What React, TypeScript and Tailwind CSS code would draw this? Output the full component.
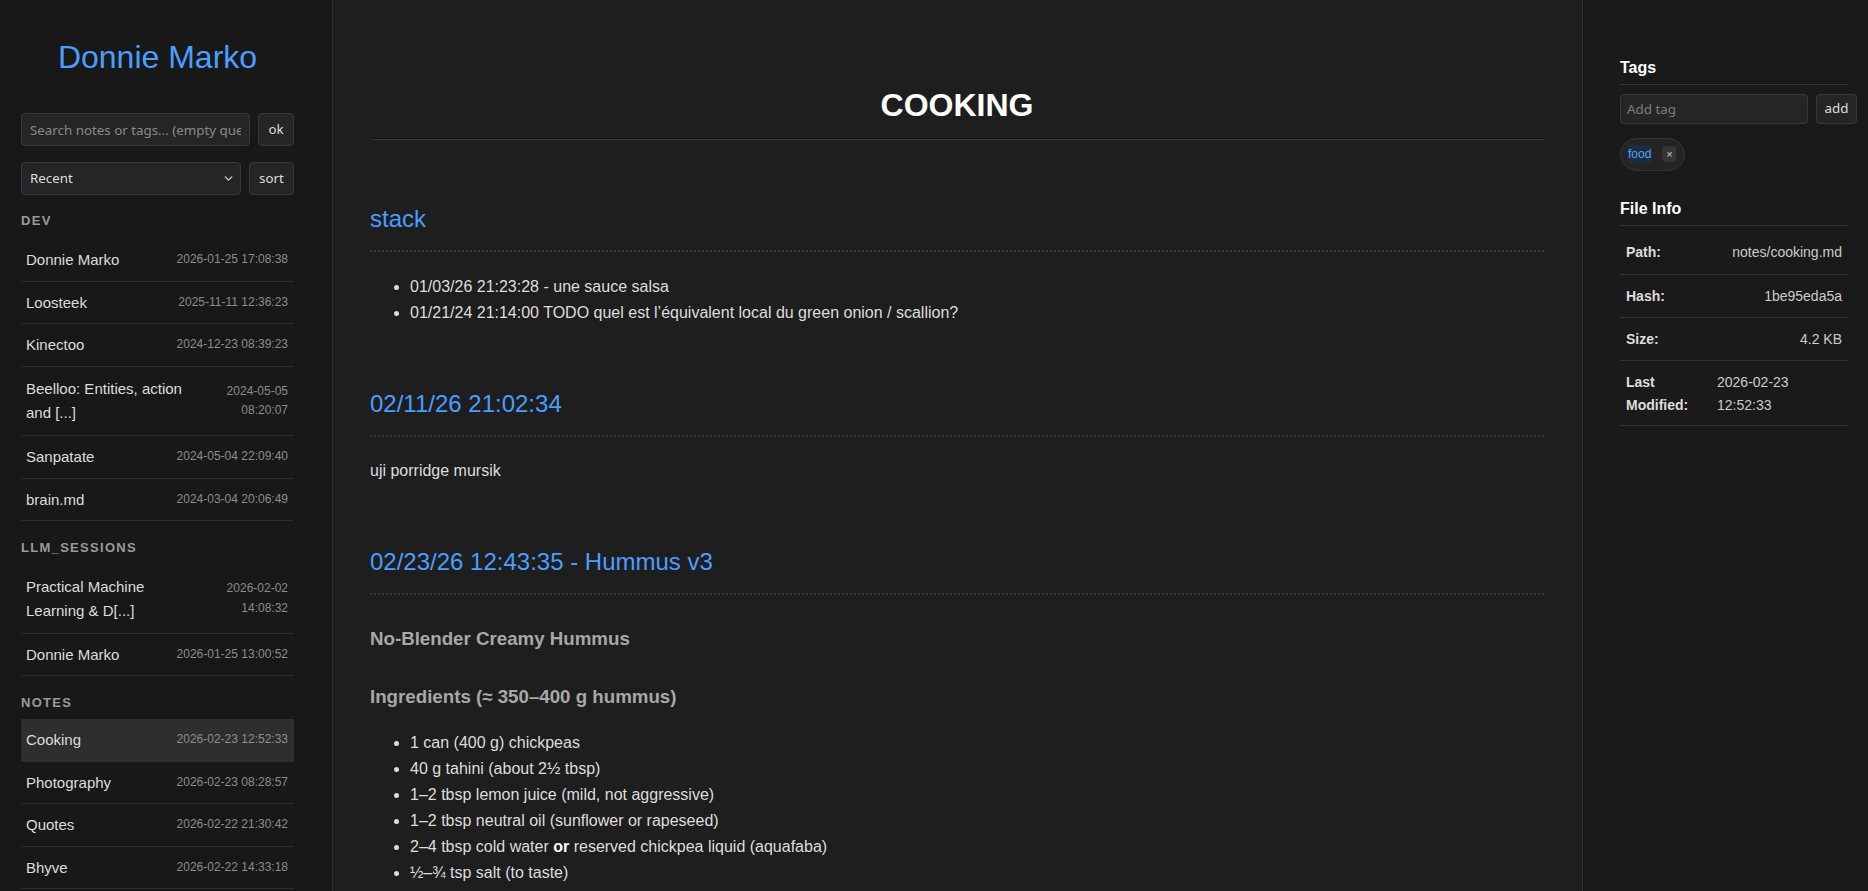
import { ChevronDown } from "lucide-react";

type Note = { name: string; date: string; wrap?: boolean; active?: boolean };
type Section = { title: string; notes: Note[] };

const sections: Section[] = [
  {
    title: "Dev",
    notes: [
      { name: "Donnie Marko", date: "2026-01-25 17:08:38" },
      { name: "Loosteek", date: "2025-11-11 12:36:23" },
      { name: "Kinectoo", date: "2024-12-23 08:39:23" },
      { name: "Beelloo: Entities, action and [...]", date: "2024-05-05 08:20:07", wrap: true },
      { name: "Sanpatate", date: "2024-05-04 22:09:40" },
      { name: "brain.md", date: "2024-03-04 20:06:49" },
    ],
  },
  {
    title: "llm_sessions",
    notes: [
      { name: "Practical Machine Learning & D[...]", date: "2026-02-02 14:08:32", wrap: true },
      { name: "Donnie Marko", date: "2026-01-25 13:00:52" },
    ],
  },
  {
    title: "Notes",
    notes: [
      { name: "Cooking", date: "2026-02-23 12:52:33", active: true },
      { name: "Photography", date: "2026-02-23 08:28:57" },
      { name: "Quotes", date: "2026-02-22 21:30:42" },
      { name: "Bhyve", date: "2026-02-22 14:33:18" },
    ],
  },
];

const fileInfo = [
  { label: "Path:", value: "notes/cooking.md" },
  { label: "Hash:", value: "1be95eda5a" },
  { label: "Size:", value: "4.2 KB" },
];

const ui = { fontFamily: '"Noto Sans", "Open Sans", sans-serif' };

function NoteRow({ note }: { note: Note }) {
  return (
    <div
      className={`flex items-center justify-between border-b border-[#2c2c2c] pl-[5px] pr-[6px] ${
        note.wrap ? "pt-[10.5px] pb-[10px]" : "pt-[9px] pb-[8.5px]"
      } ${note.active ? "bg-[#2e2e2e]" : ""}`}
    >
      <span className="min-w-0 flex-1 pr-2 text-[15px] leading-[1.6] text-[#dddddd]">{note.name}</span>
      <span
        className={`shrink-0 text-right text-xs leading-[1.6] text-[#8c8c8c] ${note.wrap ? "w-[95px]" : "whitespace-nowrap"}`}
      >
        {note.date}
      </span>
    </div>
  );
}

function Sidebar() {
  return (
    <aside className="h-screen w-[333px] shrink-0 overflow-hidden border-r border-[#2f2f2f] bg-[#181818] pl-[21px] pr-[38px] pt-[38px]">
      <h1 className="text-center text-[32px] leading-[38px] text-[#4a9eff]">Donnie Marko</h1>

      <div className="mt-[37px] flex gap-2" style={ui}>
        <input
          placeholder="Search notes or tags... (empty query shows all)"
          className="h-[33px] min-w-0 flex-1 rounded border border-[#383838] bg-[#252525] px-2 text-[13.33px] text-[#dddddd] placeholder:text-[#8a8a8a] focus:outline-none"
        />
        <button className="h-[33px] w-9 rounded border border-[#383838] bg-[#252525] text-[13.33px] text-[#dddddd]">
          ok
        </button>
      </div>

      <div className="mt-4 flex gap-2" style={ui}>
        <div className="relative flex-1">
          <select className="h-[33px] w-full appearance-none rounded border border-[#383838] bg-[#252525] px-2 text-[13.33px] text-[#dddddd] focus:outline-none">
            <option>Recent</option>
            <option>Alphabetical</option>
          </select>
          <ChevronDown className="pointer-events-none absolute right-[6px] top-[10px] h-[13px] w-[13px] text-[#cccccc]" strokeWidth={2.5} />
        </div>
        <button className="h-[33px] w-[45px] rounded border border-[#383838] bg-[#252525] text-[13.33px] text-[#dddddd]">
          sort
        </button>
      </div>

      {sections.map((section, i) => (
        <div key={section.title} className={i === 0 ? "mt-[15px]" : "mt-[16px]"}>
          <h2
            className={`text-[13px] font-bold uppercase leading-[21px] tracking-[1.3px] text-[#9a9a9a] ${
              i === 0 ? "mb-2" : "mb-[6px]"
            }`}
          >
            {section.title}
          </h2>
          {section.notes.map((note) => (
            <NoteRow key={note.name + note.date} note={note} />
          ))}
        </div>
      ))}
    </aside>
  );
}

function EntryTitle({ children, className = "mt-[60px]" }: { children: React.ReactNode; className?: string }) {
  return (
    <h2
      className={`border-b-2 border-dotted border-[#383838] pb-3 text-2xl leading-[38px] text-[#4a9eff] ${className}`}
    >
      {children}
    </h2>
  );
}

function Content() {
  return (
    <main className="h-screen min-w-0 flex-1 overflow-hidden bg-[#1e1e1e] pl-[37px] pr-[38px] pt-[86px] text-base leading-[1.6] text-[#dddddd]">
      <h1 className="border-b border-[#141414] pb-[14px] text-center text-[32px] font-bold leading-[38px] text-white shadow-[0_1px_0_#363636]">
        COOKING
      </h1>

      <EntryTitle className="mt-[61px]">stack</EntryTitle>
      <ul className="mt-[22px] list-disc pl-10">
        <li>01/03/26 21:23:28 - une sauce salsa</li>
        <li>01/21/24 21:14:00 TODO quel est l’équivalent local du green onion / scallion?</li>
      </ul>

      <EntryTitle>02/11/26 21:02:34</EntryTitle>
      <p className="mt-[21px]">uji porridge mursik</p>

      <EntryTitle className="mt-[59px]">02/23/26 12:43:35 - Hummus v3</EntryTitle>
      <h3 className="mt-[29px] text-[18.72px] font-bold leading-[30px] text-[#a8a8a8]">No-Blender Creamy Hummus</h3>
      <h3 className="mt-[28px] text-[18.72px] font-bold leading-[30px] text-[#a8a8a8]">
        Ingredients (≈ 350–400 g hummus)
      </h3>
      <ul className="mt-[18px] list-disc pl-10 leading-[26px]">
        <li>1 can (400 g) chickpeas</li>
        <li>40 g tahini (about 2½ tbsp)</li>
        <li>1–2 tbsp lemon juice (mild, not aggressive)</li>
        <li>1–2 tbsp neutral oil (sunflower or rapeseed)</li>
        <li>
          2–4 tbsp cold water <strong className="text-white">or</strong> reserved chickpea liquid (aquafaba)
        </li>
        <li>½–¾ tsp salt (to taste)</li>
      </ul>
    </main>
  );
}

function InfoPanel() {
  return (
    <aside className="h-screen w-[286px] shrink-0 overflow-hidden border-l border-[#2f2f2f] bg-[#1a1a1a] pl-[37px] pr-5 pt-[55px]">
      <h3 className="border-b border-[#333333] pb-[3px] text-base font-bold leading-[1.6] text-white">Tags</h3>
      <div className="mt-[9px] flex gap-2" style={ui}>
        <input
          placeholder="Add tag"
          className="h-[30px] w-[188px] shrink-0 rounded border border-[#383838] bg-[#252525] px-[6px] text-[13.33px] text-[#dddddd] placeholder:text-[#7d7d7d] focus:outline-none"
        />
        <button className="h-[30px] w-[41px] shrink-0 rounded border border-[#383838] bg-[#252525] text-[13.33px] text-[#dddddd]">
          add
        </button>
      </div>

      <div className="mt-[14px] flex">
        <span className="flex h-[33px] items-center gap-[10px] rounded-full border border-[#363636] bg-[#242424] pl-[6px] pr-[8px]">
          <span className="rounded-sm bg-[#1d2b3d] px-px text-xs leading-[1.6] text-[#5aa2f5]">food</span>
          <span className="flex h-4 w-[14px] items-center justify-center rounded bg-[#353535] text-[11px] leading-none text-[#cccccc]">
            ×
          </span>
        </span>
      </div>

      <h3 className="mt-[25px] border-b border-[#333333] pb-[4px] text-base font-bold leading-[1.6] text-white">
        File Info
      </h3>
      <div className="mt-[5px] text-sm leading-[1.6]">
        {fileInfo.map((row) => (
          <div key={row.label} className="grid grid-cols-[91px_1fr] border-b border-[#333333] px-[6px] py-[10px]">
            <span className="font-bold text-[#dddddd]">{row.label}</span>
            <span className="text-right text-[#cccccc]">{row.value}</span>
          </div>
        ))}
        <div className="grid grid-cols-[91px_1fr] border-b border-[#333333] px-[6px] pb-[9px] pt-[10px]">
          <span className="font-bold text-[#dddddd]">Last Modified:</span>
          <span className="w-[80px] text-[#cccccc]">2026-02-23 12:52:33</span>
        </div>
      </div>
    </aside>
  );
}

export default function App() {
  return (
    <div className="flex h-screen w-full overflow-hidden" style={{ fontFamily: '"Liberation Sans", Arial, sans-serif' }}>
      <Sidebar />
      <Content />
      <InfoPanel />
    </div>
  );
}
